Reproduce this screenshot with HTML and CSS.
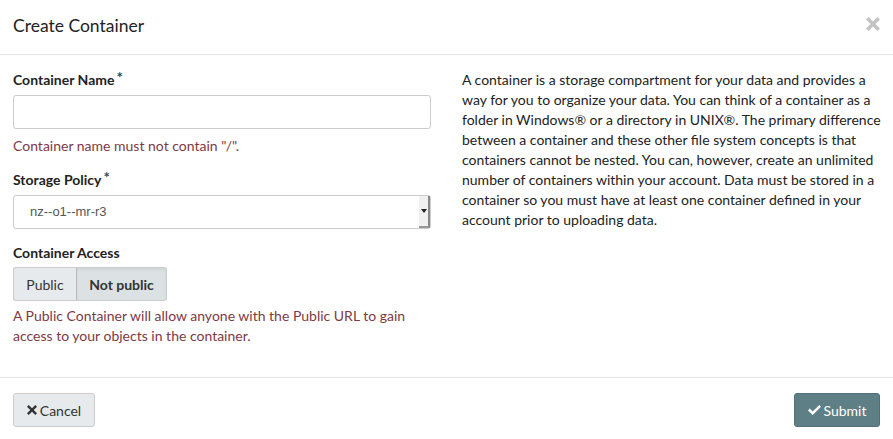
FILE: index.html
```html
<!DOCTYPE html>
<html>
<head>
<meta charset="utf-8">
<link rel="stylesheet" href="styles.css">
</head>
<body>
<div class="modal">
  <div class="modal-header">
    <h4 class="title">Create Container</h4>
    <span class="close"><svg width="14" height="14" viewBox="0 0 10 10"><path d="M1.8 0 5 3.2 8.2 0 10 1.8 6.8 5 10 8.2 8.2 10 5 6.8 1.8 10 0 8.2 3.2 5 0 1.8Z" fill="#c4c4c4"/></svg></span>
  </div>
  <div class="modal-body">
    <div class="col-left">
      <div class="field">
        <label class="label">Container Name<span class="req">*</span></label>
        <input class="input" type="text">
        <div class="hint">Container name must not contain "/".</div>
      </div>
      <div class="field">
        <label class="label">Storage Policy<span class="req">*</span></label>
        <div class="select">
          <span class="select-text">nz--o1--mr-r3</span>
          <span class="select-arrow"><svg width="6" height="4" viewBox="0 0 6 4"><path d="M0 0H6L3 4Z" fill="#222"/></svg></span>
        </div>
      </div>
      <div class="field last">
        <label class="label">Container Access</label>
        <div class="btn-group">
          <button class="seg">Public</button>
          <button class="seg active">Not public</button>
        </div>
        <div class="hint">A Public Container will allow anyone with the Public URL to gain access to your objects in the container.</div>
      </div>
    </div>
    <div class="col-right">
      <p>A container is a storage compartment for your data and provides a way for you to organize your data. You can think of a container as a folder in Windows® or a directory in UNIX®. The primary difference between a container and these other file system concepts is that containers cannot be nested. You can, however, create an unlimited number of containers within your account. Data must be stored in a container so you must have at least one container defined in your account prior to uploading data.</p>
    </div>
  </div>
  <div class="modal-footer">
    <button class="btn btn-default"><svg class="ico" width="10" height="10" viewBox="0 0 10 10"><path d="M1.7 0 5 3.3 8.3 0 10 1.7 6.7 5 10 8.3 8.3 10 5 6.7 1.7 10 0 8.3 3.3 5 0 1.7Z" fill="#333"/></svg>Cancel</button>
    <button class="btn btn-primary"><svg class="ico" width="13" height="10" viewBox="0 0 13 10"><path d="M0 5.4 1.8 3.6 4.7 6.5 11.2 0 13 1.8 4.7 10Z" fill="#fff"/></svg>Submit</button>
  </div>
</div>
</body>
</html>
```
FILE: styles.css
```css
* { box-sizing: border-box; }
html, body { margin: 0; padding: 0; background: #fff; }
body {
  font-family: Lato, "Open Sans", "Liberation Sans", sans-serif;
  font-size: 14px;
  color: #333;
  line-height: 20px;
}
.modal { width: 893px; height: 439px; display: flex; flex-direction: column; }
.modal-header {
  height: 55px;
  border-bottom: 1px solid #e5e5e5;
  display: flex;
  align-items: center;
  justify-content: space-between;
  padding: 0 13px 2px 13px;
}
.title { margin: 0; font-size: 17.5px; font-weight: 400; color: #222; line-height: 20px; }
.close { display: flex; margin-right: 0; margin-top: -4px; }
.modal-body {
  flex: 1;
  display: grid;
  grid-template-columns: 418px 1fr;
  column-gap: 31px;
  padding: 15px 6px 0 13px;
  border-bottom: 1px solid #e5e5e5;
}
.field { display: flex; flex-direction: column; margin-bottom: 14px; }
.field.last { margin-bottom: 0; margin-top: 1px; }
.label { font-weight: 700; color: #222; line-height: 20px; margin-bottom: 5px; display: block; }
.req { color: #1f4e58; font-size: 15px; line-height: 10px; vertical-align: top; position: relative; top: 2px; margin-left: 2px; }
.input {
  height: 34px;
  border: 1px solid #ccc;
  border-radius: 3px;
  width: 100%;
  font-family: inherit;
  font-size: 14px;
  padding: 6px 12px;
  margin: 0;
}
.hint { color: #7d3a44; margin-top: 7px; }
.field.last .hint { margin-top: 5px; }
.select {
  height: 34px;
  border: 1px solid #ccc;
  border-radius: 3px;
  display: flex;
  align-items: center;
  justify-content: space-between;
  padding-left: 16px;
}
.select-text { font-family: "Liberation Sans", Arial, sans-serif; font-size: 13px; color: #555; }
.select-arrow {
  width: 11px;
  height: 32px;
  background: #f0f0f0;
  border-right: 2px solid #888;
  border-bottom: 2px solid #999;
  display: flex;
  align-items: center;
  justify-content: center;
}
.field.last .label { margin-bottom: 4px; }
.btn-group { display: flex; }
.seg {
  height: 34px;
  font-family: inherit;
  font-size: 14px;
  color: #333;
  background: #e6eaec;
  border: 1px solid #ccc;
  padding: 0;
  margin: 0;
}
.seg:first-child { border-radius: 3px 0 0 3px; width: 63px; border-right: none; }
.seg.active { background: #dce1e4; font-weight: 700; border-radius: 0 3px 3px 0; border-left: 1px solid #bbb; width: 91px; box-shadow: inset 0 2px 3px rgba(0,0,0,0.06); }
.col-right p { margin: 0; color: #222; }
.modal-footer {
  height: 61px;
  display: flex;
  align-items: center;
  justify-content: space-between;
  padding: 0 13px 0 13px;
}
.btn {
  height: 34px;
  font-family: inherit;
  font-size: 14px;
  border-radius: 3px;
  padding: 0;
  display: flex;
  align-items: center;
  justify-content: center;
  margin-top: 3px;
}
.ico { margin-right: 3px; }
.btn-default { background: #e6eaec; border: 1px solid #ccc; color: #333; width: 82px; }
.btn-primary { background: #5f7f86; border: 1px solid #52707a; color: #fff; width: 86px; }
```
